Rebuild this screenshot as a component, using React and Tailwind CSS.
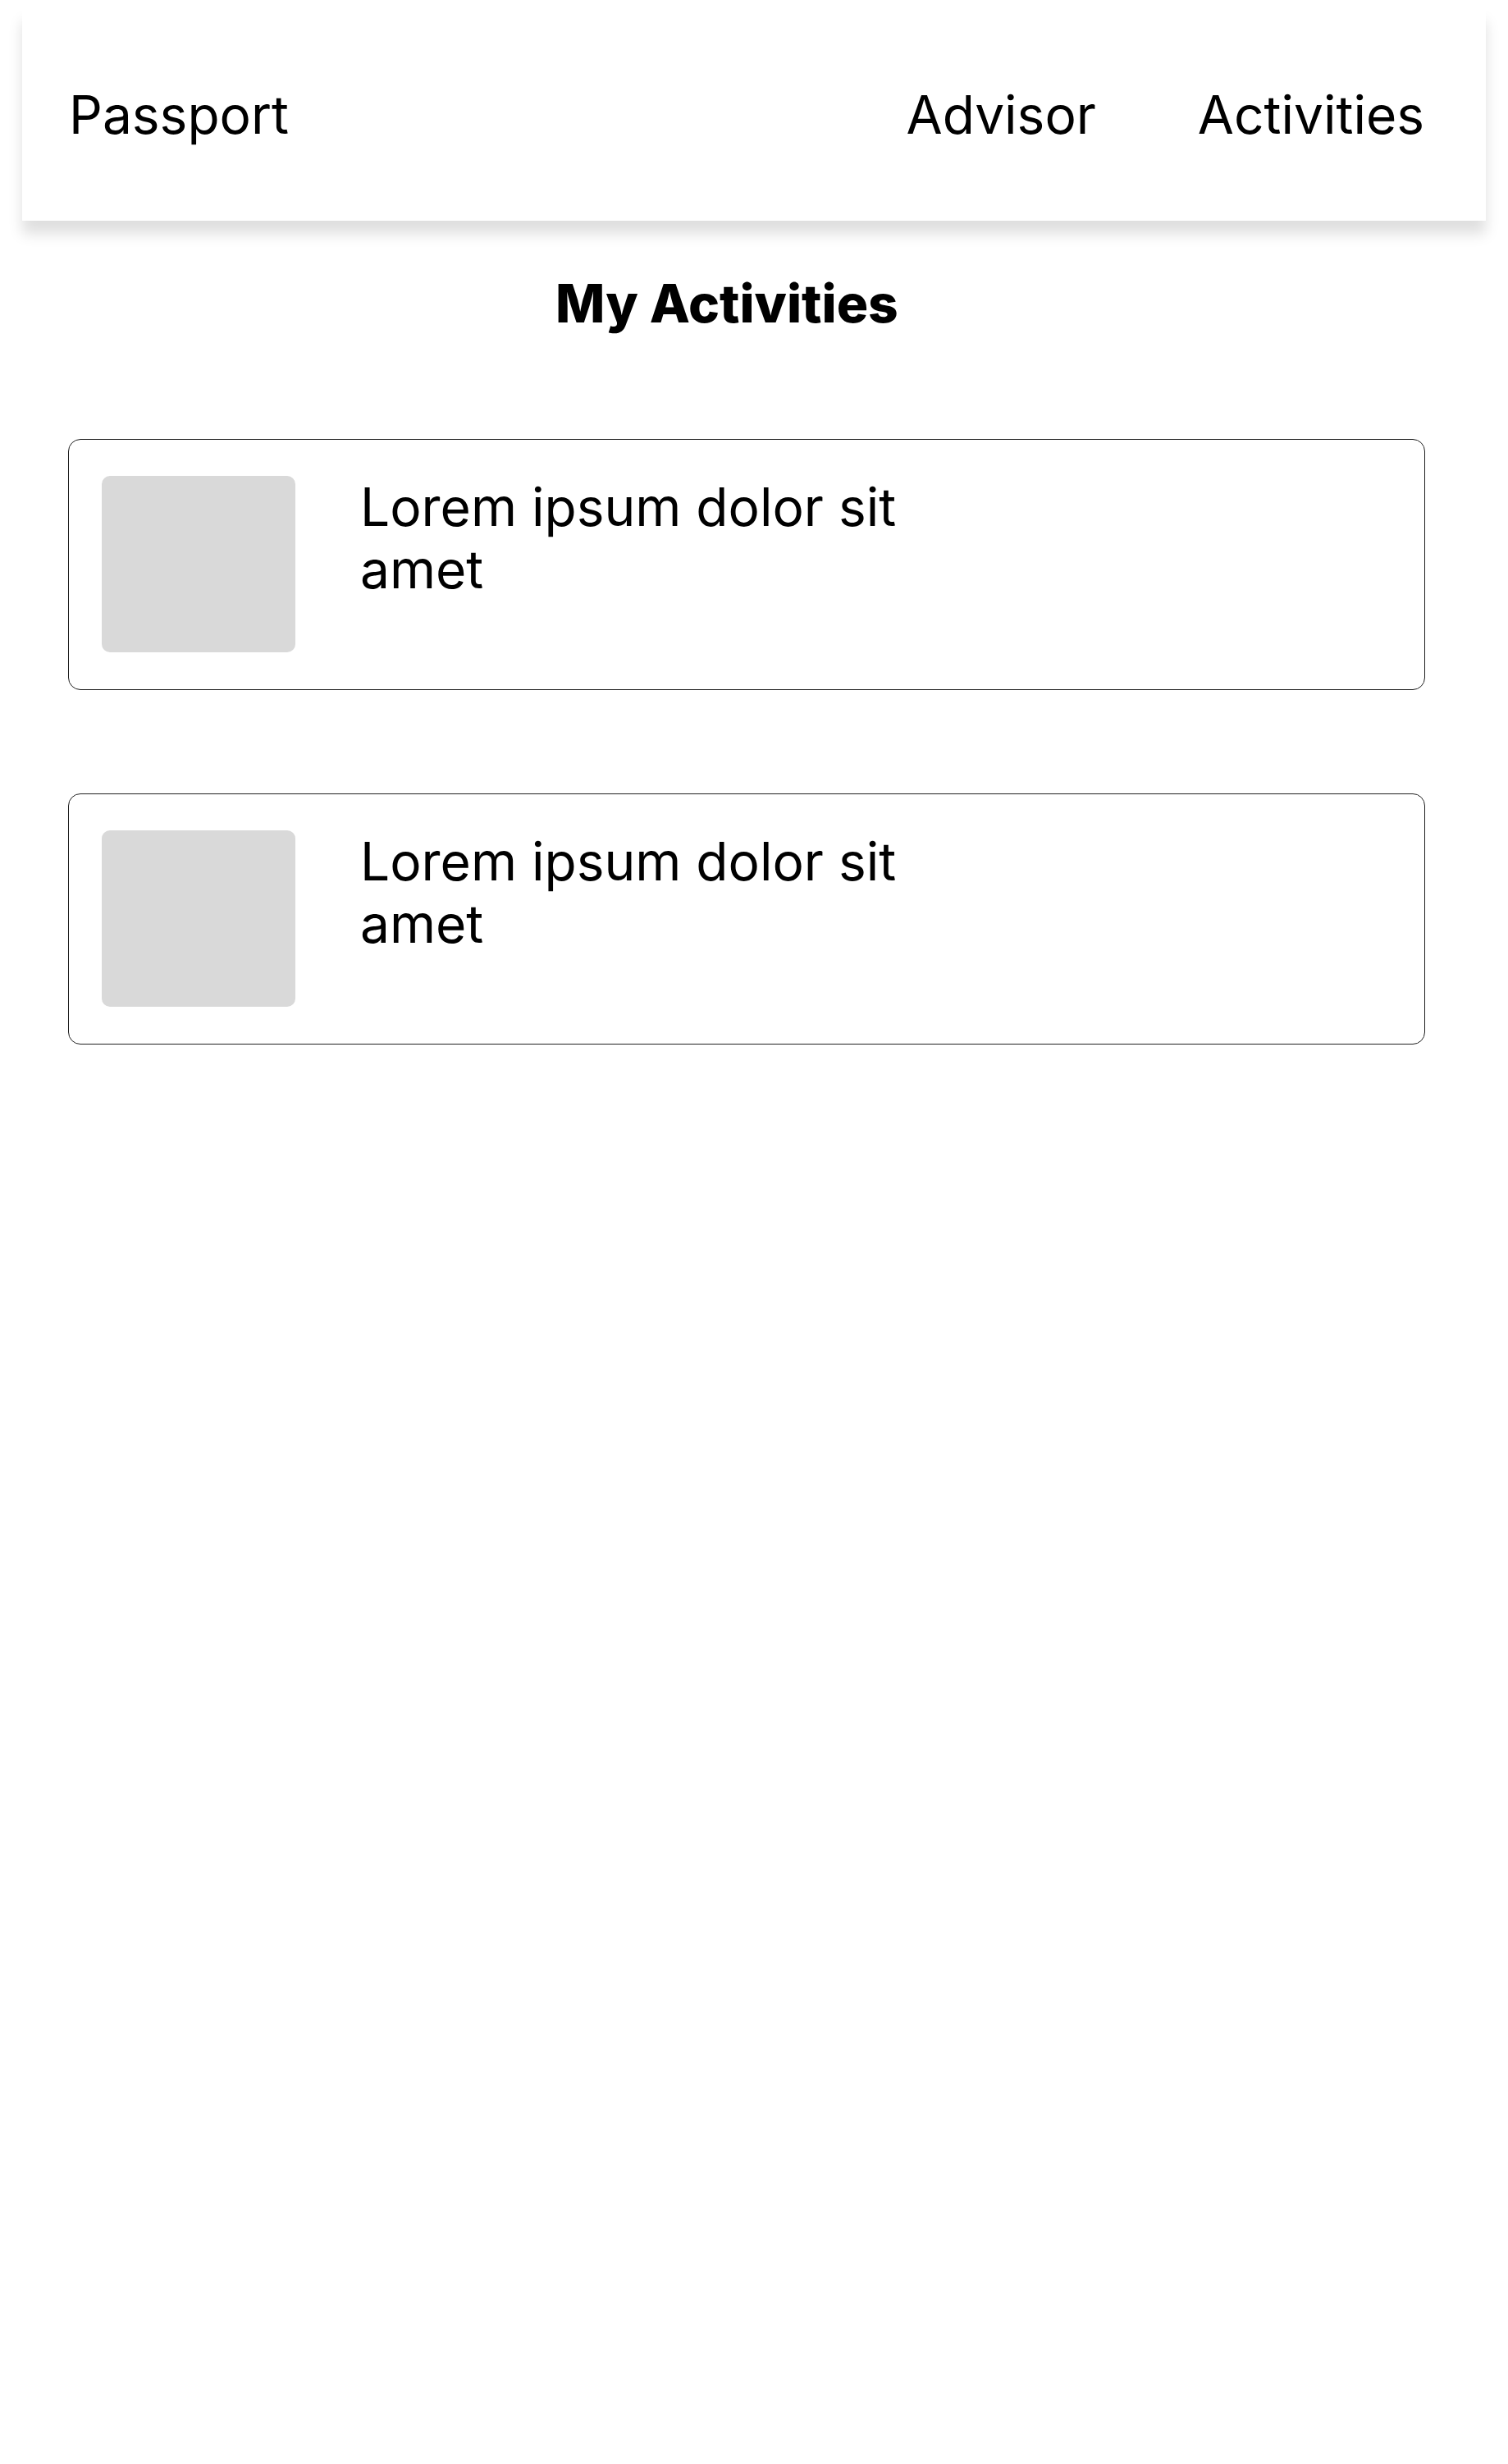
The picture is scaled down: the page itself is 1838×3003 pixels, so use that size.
import React from 'react';

const ActivityCard = () => {
    return (
        <div className="h-[306px] rounded-[15px] border border-[#1f1f1f] bg-white pl-[40px] pt-[44px] flex items-start">
            {/* Thumbnail */}
            <div className="w-[236px] h-[215px] rounded-[10px] bg-[#d9d9d9] shrink-0"></div>

            {/* Title */}
            <p className="ml-[79px] w-[700px] text-[64px] leading-[76px] text-black">
                Lorem ipsum dolor sit amet
            </p>
        </div>
    );
};

const App = () => {
    return (
        <div className="min-h-screen bg-white pt-[10px] pb-20 font-['Inter','Noto_Sans',sans-serif]">
            {/* Top nav */}
            <header className="mx-[27px] h-[259px] bg-white shadow-[0_16px_16px_rgba(0,0,0,0.13)] flex items-center justify-between pl-[57px] pr-[75px] text-[64px] text-black">
                <span>Passport</span>
                <nav className="flex items-center gap-[124px]">
                    <span>Advisor</span>
                    <span>Activities</span>
                </nav>
            </header>

            <h1 className="mt-[62px] pl-[677px] text-[64px] leading-[77px] font-extrabold text-black">
                My Activities
            </h1>

            {/* Activity list */}
            <div className="mt-[127px] ml-[83px] mr-[101px] flex flex-col gap-[126px]">
                <ActivityCard />
                <ActivityCard />
            </div>
        </div>
    );
};

export default App;
